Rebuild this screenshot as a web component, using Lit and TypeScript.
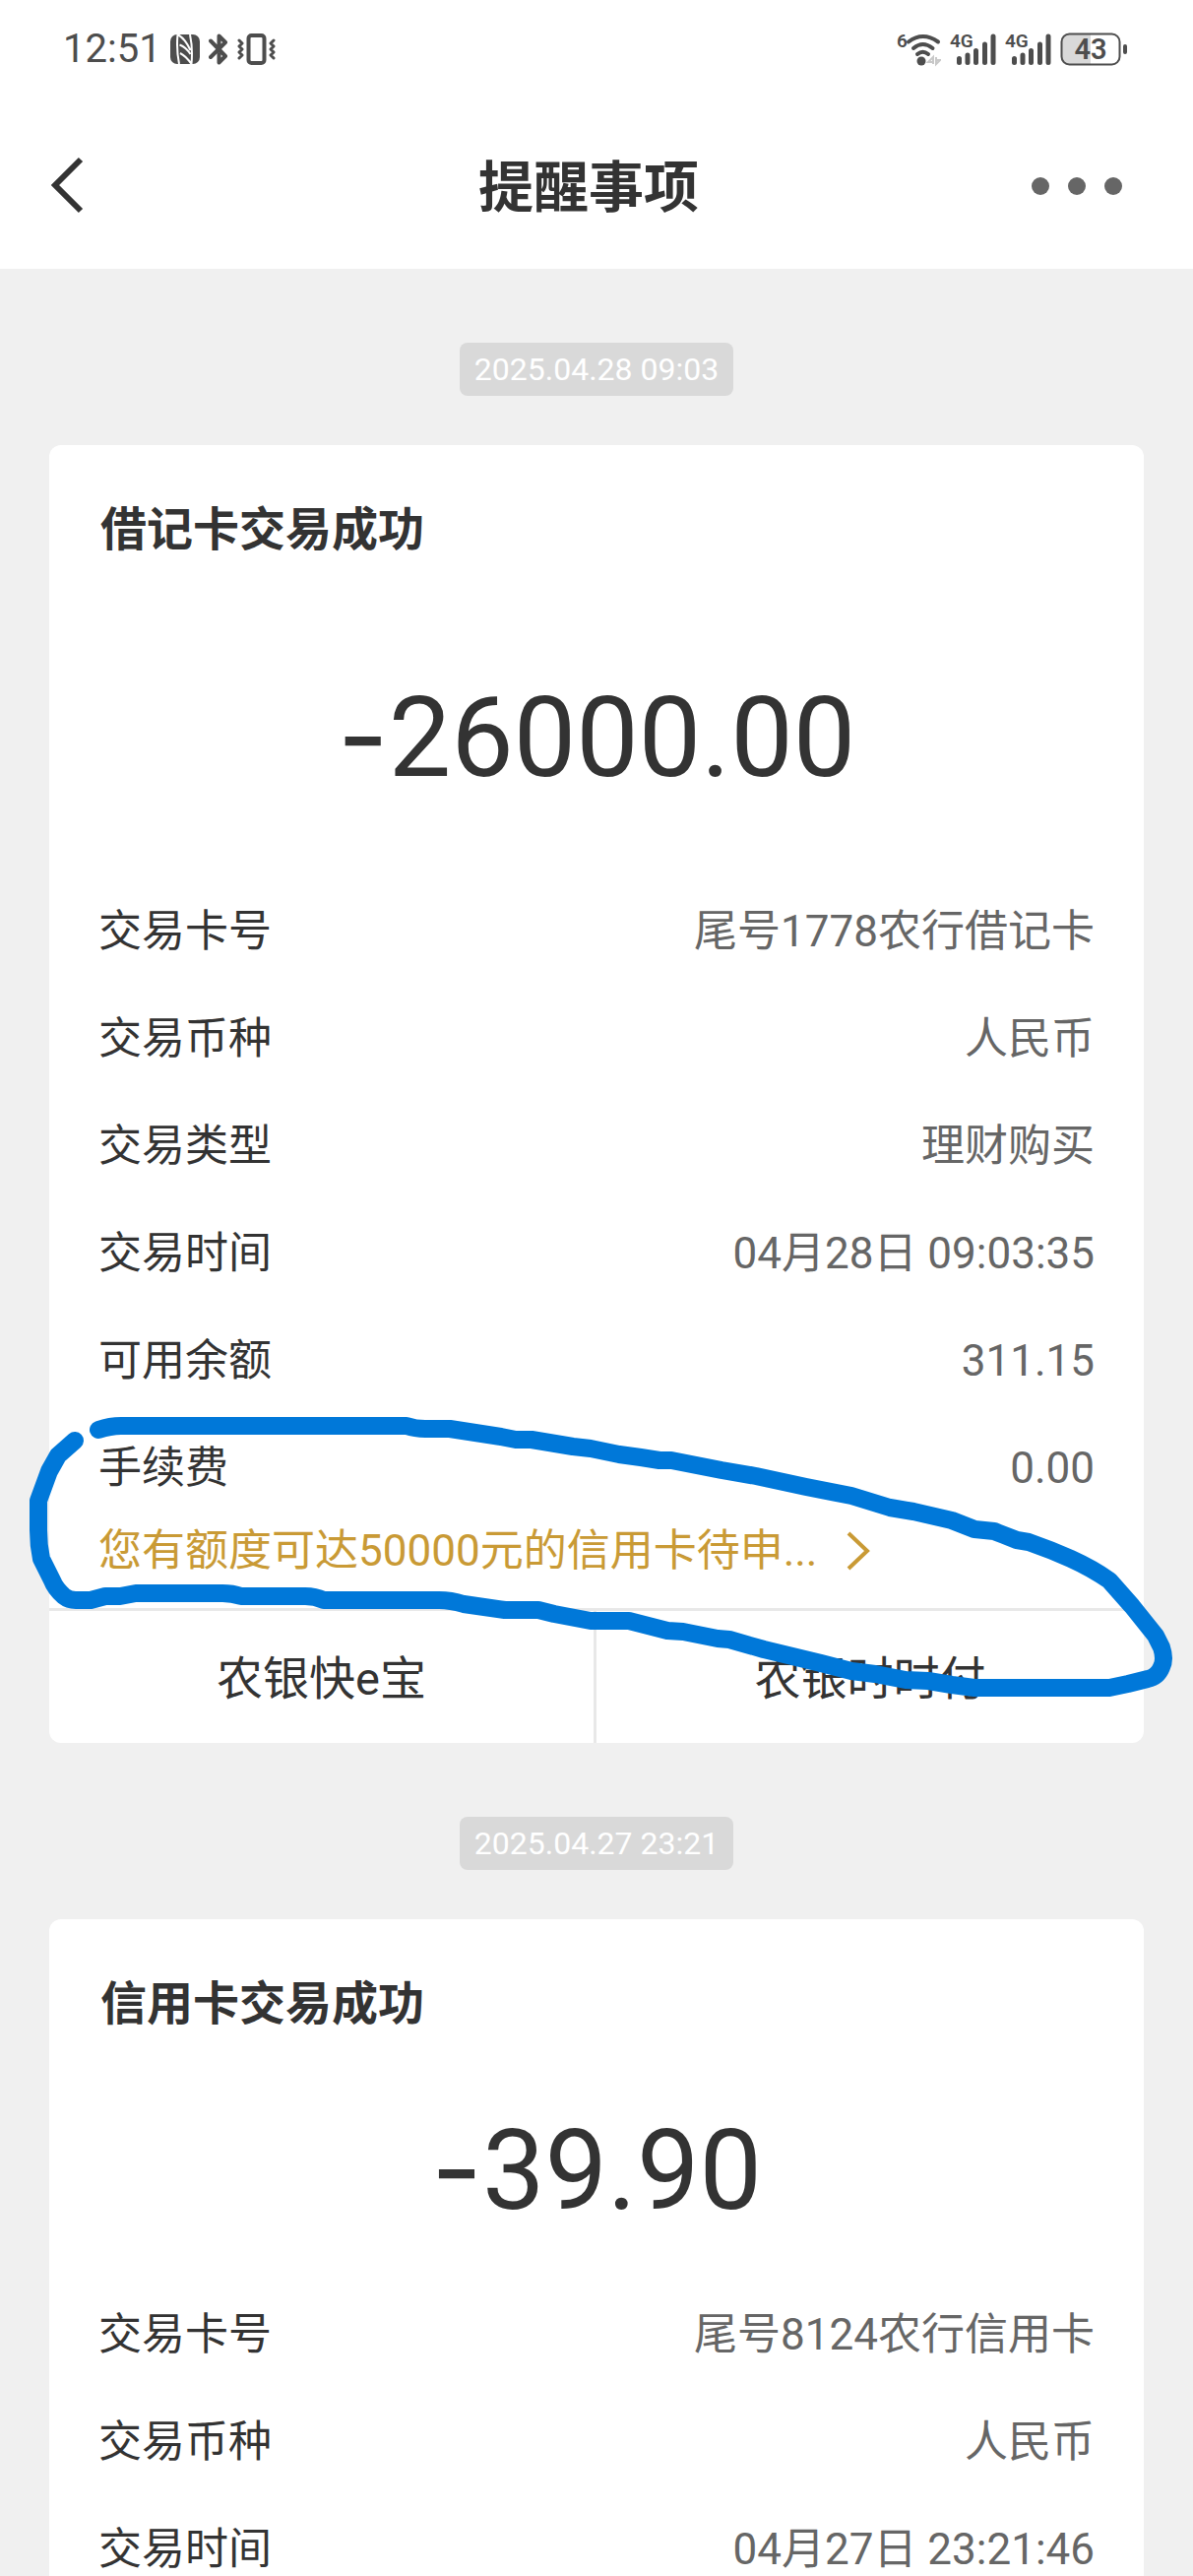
import { LitElement, html, css, svg, nothing } from "lit";
import { customElement, property } from "lit/decorators.js";

interface Detail {
  label: string;
  value: string;
}

interface Notice {
  time: string;
  title: string;
  amount: string;
  details: Detail[];
  promo?: string;
  actions?: string[];
}

const NOTICES: Notice[] = [
  {
    time: "2025.04.28 09:03",
    title: "借记卡交易成功",
    amount: "26000.00",
    details: [
      { label: "交易卡号", value: "尾号1778农行借记卡" },
      { label: "交易币种", value: "人民币" },
      { label: "交易类型", value: "理财购买" },
      { label: "交易时间", value: "04月28日 09:03:35" },
      { label: "可用余额", value: "311.15" },
      { label: "手续费", value: "0.00" },
    ],
    promo: "您有额度可达50000元的信用卡待申...",
    actions: ["农银快e宝", "农银时时付"],
  },
  {
    time: "2025.04.27 23:21",
    title: "信用卡交易成功",
    amount: "39.90",
    details: [
      { label: "交易卡号", value: "尾号8124农行信用卡" },
      { label: "交易币种", value: "人民币" },
      { label: "交易时间", value: "04月27日 23:21:46" },
    ],
  },
];

@customElement("status-bar")
export class StatusBar extends LitElement {
  static styles = css`
    :host {
      display: flex;
      align-items: center;
      justify-content: space-between;
      height: 100px;
      padding: 0 66px 0 64px;
      color: #4d4d4d;
      font-family: Roboto, "Noto Sans CJK SC", sans-serif;
    }
    .group {
      display: flex;
      align-items: center;
      gap: 9px;
    }
    .time {
      font-size: 40px;
      line-height: 48px;
    }
    svg {
      display: block;
      fill: currentColor;
    }
    .net {
      font-size: 19px;
      font-weight: 600;
    }
    .level {
      font-size: 29px;
      font-weight: 600;
    }
  `;

  private signal() {
    return html`<svg width="47" height="50" viewBox="0 -8 47 50" aria-hidden="true">
      <text class="net" x="0" y="15">4G</text>
      <g fill="none" stroke="currentColor" stroke-width="5" stroke-linecap="round">
        <path d="M9.500 26.500v4M18 23v7.500M26.500 18.500v12M35.500 12v18.500M44 4v26.500" />
      </g>
    </svg>`;
  }

  render() {
    return html`
      <div class="group">
        <span class="time">12:51</span>
        <svg width="30" height="30" viewBox="0 0 30 30" aria-hidden="true">
          <rect width="30" height="30" rx="7" />
          <path
            d="M7.500 0Q6 15 9 30M7.500 0Q15 4 20.500 16M9.500 10.500Q16 13 20.500 20M10 19Q16 22 21.500 30M20 0Q23 14 21.500 30"
            fill="none"
            stroke="#fff"
            stroke-width="2"
          />
        </svg>
        <svg width="20" height="32" viewBox="0 0 20 32" aria-hidden="true">
          <path
            d="M2 7.500L17 23L10.500 29.500V21M10.500 11V2.500L17 9L2 24"
            fill="none"
            stroke="currentColor"
            stroke-width="4"
            stroke-linejoin="round"
            stroke-linecap="round"
          />
        </svg>
        <svg width="40" height="32" viewBox="0 0 40 32" aria-hidden="true">
          <g fill="none" stroke="currentColor" stroke-linecap="round" stroke-linejoin="round">
            <rect x="11.500" y="2" width="16" height="28" rx="3" stroke-width="4" />
            <path
              d="M2 7l3 3L2 13l3 3L2 19l3 3L2 25M37 7l-3 3L37 13l-3 3L37 19l-3 3L37 25"
              stroke-width="3"
            />
          </g>
        </svg>
      </div>
      <div class="group">
        <svg width="46" height="50" viewBox="0 -8 46 50" aria-hidden="true">
          <text class="net" x="1" y="15">6</text>
          <g fill="none" stroke="currentColor" stroke-width="4" stroke-linecap="round">
            <path d="M13 9.500Q27.500 -1.500 43 9.500M18 16Q27.500 8 37.500 16M22 22Q27.500 17.500 33 22" />
          </g>
          <circle cx="26" cy="29" r="4.500" />
          <path d="M38 32v-7l-5 5h5M41 25v7l4-4h-4" fill="none" stroke="#c8c8c8" stroke-width="2" />
        </svg>
        ${this.signal()} ${this.signal()}
        <svg width="69" height="50" viewBox="0 -8 69 50" aria-hidden="true">
          <path d="M31 1H9Q1 1 1 9V25Q1 33 9 33H31Z" fill="#d9d9d9" />
          <rect x="1.500" y="1.500" width="59" height="31" rx="8" fill="none" stroke="currentColor" stroke-width="2" />
          <text class="level" x="31" y="27" text-anchor="middle">43</text>
          <rect x="64" y="12" width="4" height="10" rx="2" />
        </svg>
      </div>
    `;
  }
}

@customElement("notice-card")
export class NoticeCard extends LitElement {
  @property({ attribute: false }) notice!: Notice;
  @property({ type: Boolean, reflect: true }) marked = false;

  static styles = css`
    :host {
      display: flex;
      flex-direction: column;
      position: relative;
      margin: 0 50px;
      background: #fff;
      border-radius: 12px;
      color: #333;
    }
    .title {
      margin: 0;
      padding: 56px 52px 0;
      font-size: 47px;
      line-height: 60px;
      font-weight: 700;
    }
    .amount {
      margin: 77px 0 76px;
      font-size: 113px;
      line-height: 120px;
      text-align: center;
    }
    :host([marked]) .amount {
      margin: 119px 0 106px;
    }
    .sign {
      font-family: Inter, sans-serif;
    }
    .details {
      display: flex;
      flex-direction: column;
      gap: 49px;
      margin: 0;
      padding: 0 50px;
      font-size: 44px;
      line-height: 60px;
    }
    .row {
      display: flex;
      justify-content: space-between;
    }
    .row dt,
    .row dd {
      margin: 0;
    }
    .row dd {
      color: #666;
    }
    .promo {
      display: flex;
      align-items: center;
      gap: 30px;
      margin: 24px 50px 28px;
      font-size: 44px;
      line-height: 60px;
      color: #c99a35;
      text-decoration: none;
    }
    .actions {
      display: grid;
      grid-template-columns: 1fr 1fr;
      border-top: 3px solid #e8e8e8;
    }
    .action {
      height: 134px;
      padding: 0 0 6px;
      border: 0;
      background: none;
      color: inherit;
      font: inherit;
      font-size: 47px;
    }
    .action:first-child {
      border-right: 3px solid #e8e8e8;
    }
    .ink {
      position: absolute;
      left: -50px;
      bottom: 39px;
      width: calc(100% + 100px);
      height: 300px;
      pointer-events: none;
    }
  `;

  private ink() {
    return html`<svg class="ink" viewBox="0 1430 1212 300" aria-hidden="true">
      ${svg`<path fill="none" stroke="#0078d9" stroke-width="18" stroke-linecap="round" stroke-linejoin="round"
        d="M100 1451Q112 1447 123 1447H413Q422 1450 432 1450H457L509 1458L524 1461H540L582 1468L600 1470L629 1476L651 1479L670 1482H682L733 1492L768 1498L819 1509L865 1518L904 1530L928 1534L967 1543L990 1552L1010 1554L1033 1563L1045 1565Q1068 1573 1088 1582Q1110 1592 1127 1604L1150 1630L1174 1660L1180 1672Q1184 1684 1180 1692Q1176 1702 1166 1704L1146 1709L1127 1713H990L967 1710L943 1706L920 1705L889 1699L865 1696L834 1688L776 1674L741 1664L729 1663L694 1656L678 1655L639 1645H600L563 1638L547 1634H513L471 1628Q458 1624 446 1624H329Q320 1620 310 1620H245Q236 1617 226 1617H138L122 1620H107L92 1624H77Q70 1624 65 1620Q56 1612 53 1604L42 1582Q39 1568 39 1553V1523L50 1493L59 1477L76 1462" />`}
    </svg>`;
  }

  render() {
    const n = this.notice;
    return html`
      <h2 class="title">${n.title}</h2>
      <div class="amount"><span class="sign">-</span>${n.amount}</div>
      <dl class="details">
        ${n.details.map((d) => html`<div class="row"><dt>${d.label}</dt><dd>${d.value}</dd></div>`)}
      </dl>
      ${n.promo
        ? html`<a class="promo" href="#apply"
            >${n.promo}<svg width="24" height="40" viewBox="0 0 24 40" aria-hidden="true">
              <path d="M2 2L21 20L2 38" fill="none" stroke="currentColor" stroke-width="4" /></svg
          ></a>`
        : nothing}
      ${n.actions
        ? html`<div class="actions">
            ${n.actions.map((a) => html`<button class="action" type="button">${a}</button>`)}
          </div>`
        : nothing}
      ${this.marked ? this.ink() : nothing}
    `;
  }
}

@customElement("app-root")
export class AppRoot extends LitElement {
  static styles = css`
    :host {
      display: flex;
      flex-direction: column;
      min-height: 100vh;
      background: #f0f0f0;
      font-family: Roboto, "Noto Sans CJK SC", sans-serif;
    }
    .top {
      background: #fff;
    }
    .nav {
      display: grid;
      grid-template-columns: 1fr auto 1fr;
      align-items: center;
      height: 173px;
      padding: 4px 64px 0 48px;
      box-sizing: border-box;
    }
    .heading {
      margin: 0;
      padding-top: 4px;
      font-size: 56px;
      line-height: 64px;
      font-weight: 700;
      color: #333;
    }
    .icon {
      display: flex;
      padding: 0;
      border: 0;
      background: none;
    }
    .more {
      justify-self: end;
    }
    .feed {
      flex: 1;
      display: flex;
      flex-direction: column;
    }
    .stamp {
      align-self: center;
      margin: 75px 0 50px;
      padding: 0 15px;
      border-radius: 8px;
      background: #d9d9d9;
      color: #fff;
      font-size: 32px;
      line-height: 54px;
    }
    .last {
      flex: 1;
      border-radius: 12px 12px 0 0;
    }
  `;

  render() {
    return html`
      <header class="top">
        <status-bar></status-bar>
        <nav class="nav">
          <button class="icon" type="button" aria-label="返回">
            <svg width="40" height="60" viewBox="0 0 40 60" aria-hidden="true">
              <path d="M34 3L8 29L34 55" fill="none" stroke="#333" stroke-width="6" />
            </svg>
          </button>
          <h1 class="heading">提醒事项</h1>
          <button class="icon more" type="button" aria-label="更多">
            <svg width="100" height="20" viewBox="0 0 100 20" fill="#666" aria-hidden="true">
              <circle cx="9" cy="10" r="9" />
              <circle cx="46" cy="10" r="9" />
              <circle cx="83" cy="10" r="9" />
            </svg>
          </button>
        </nav>
      </header>
      <main class="feed">
        ${NOTICES.map(
          (n, i) => html`
            <time class="stamp">${n.time}</time>
            <notice-card
              class=${i === NOTICES.length - 1 ? "last" : ""}
              .notice=${n}
              ?marked=${i === 0}
            ></notice-card>
          `
        )}
      </main>
    `;
  }
}
